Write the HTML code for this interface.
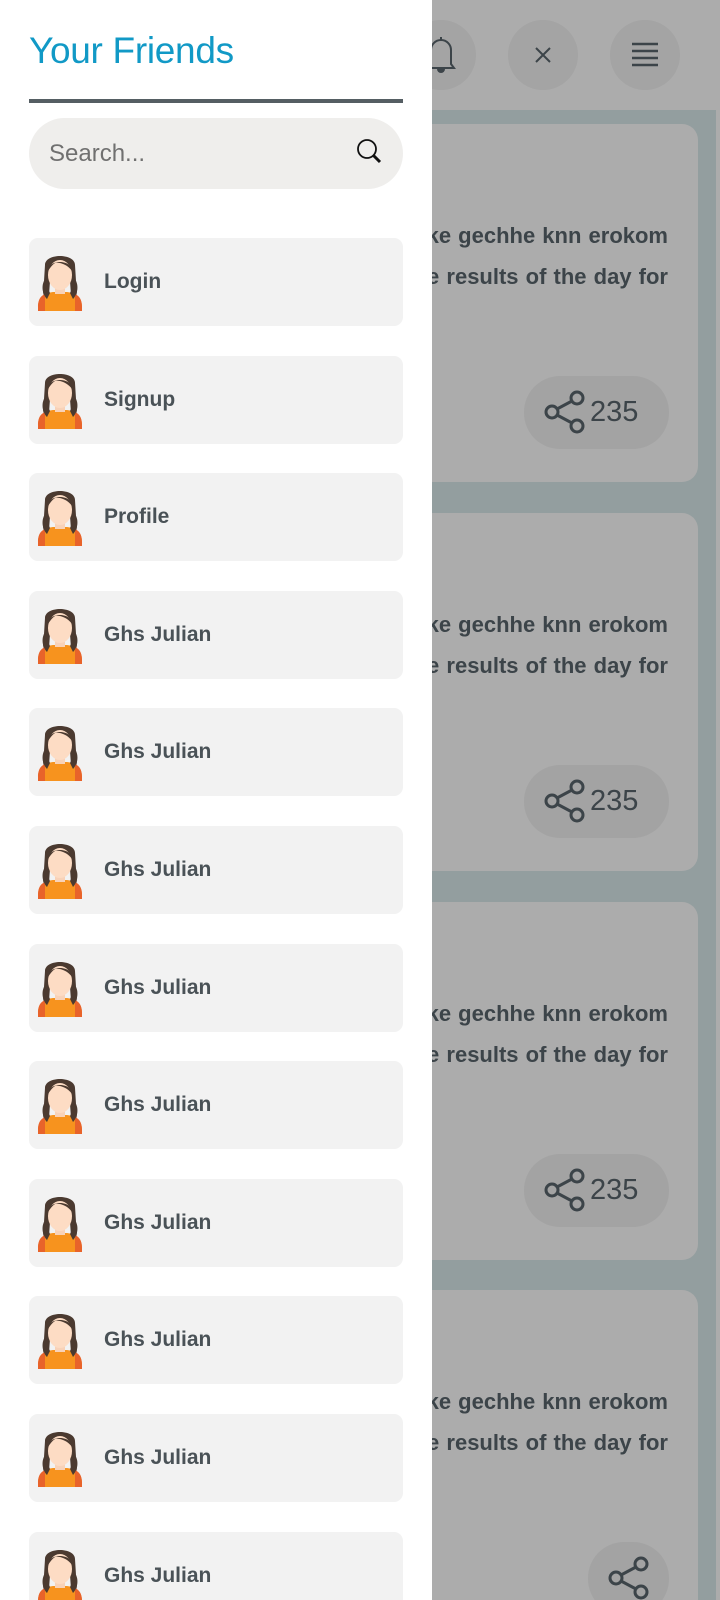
<!DOCTYPE html>
<html><head><meta charset="utf-8">
<style>
*{margin:0;padding:0;box-sizing:border-box}
html{width:720px;height:1600px;overflow:hidden}
body{width:720px;height:1600px;overflow:hidden;position:relative;background:#acacac;font-family:"Liberation Sans",Arial,sans-serif}
.band{position:absolute;left:0;top:110px;width:716px;height:1490px;background:#939e9f}
.circ{position:absolute;top:20px;width:70px;height:70px;border-radius:50%;background:#a4a4a4}
.card{position:absolute;left:300px;width:398px;height:358px;border-radius:16px;background:#acacac;overflow:hidden}
.line{position:absolute;right:30px;font-weight:bold;font-size:22px;color:#3c4449;white-space:nowrap;word-spacing:1px}
.pill{position:absolute;left:224px;width:145px;height:73px;border-radius:36px;background:#a3a3a3}
.pill span{position:absolute;left:66px;top:20px;font-size:29px;color:#3c4449}
.drawer{position:absolute;left:0;top:0;width:432px;height:1600px;background:#fff;z-index:5;overflow:hidden}
h1{position:absolute;left:29px;top:30px;font-size:37px;font-weight:normal;color:#1199c6;letter-spacing:-0.3px}
.div{position:absolute;left:29px;top:99px;width:374px;height:4px;background:#555e63}
.search{position:absolute;left:29px;top:118px;width:374px;height:71px;border-radius:36px;background:#efeeec}
.search span{position:absolute;left:20px;top:22px;font-size:24px;color:#707070}
.fr{position:absolute;left:29px;width:374px;height:88px;border-radius:9px;background:#f2f2f2}
.fr svg{position:absolute;left:6px;top:13px}
.fr span{position:absolute;left:75px;top:32px;font-size:21px;font-weight:bold;color:#4a5257}
</style></head><body>
<div class="band"></div>
<div class="circ" style="left:406px"><svg width="70" height="70" viewBox="0 0 70 70"><path d="M25 44 V30 a10 10 0 0 1 20 0 V44 l3 4 H22 z M35 17 v3" fill="none" stroke="#3c4449" stroke-width="2"/><path d="M31 49 h8 a4 4 0 0 1 -8 0z" fill="#3c4449"/></svg></div>
<div class="circ" style="left:508px"><svg width="70" height="70"><path d="M28 28 L42 42 M42 28 L28 42" stroke="#3c4449" stroke-width="2"/></svg></div>
<div class="circ" style="left:610px"><svg width="70" height="70"><path d="M22 24 H48 M22 31 H48 M22 38 H48 M22 45 H48" stroke="#3c4449" stroke-width="2.5"/></svg></div>

<div class="card" style="top:124px"><div class="line" style="top:99px">ke gechhe knn erokom</div><div class="line" style="top:140px">the results of the day for</div><div class="pill" style="top:252px"><svg width="60" height="73" style="position:absolute;left:18px;top:0"><circle cx="10" cy="36" r="6" fill="none" stroke="#3c4449" stroke-width="3"/><circle cx="35" cy="22" r="6" fill="none" stroke="#3c4449" stroke-width="3"/><circle cx="35" cy="50" r="6" fill="none" stroke="#3c4449" stroke-width="3"/><path d="M15 33 L30 25 M15 39 L30 47" stroke="#3c4449" stroke-width="3"/></svg><span>235</span></div></div>
<div class="card" style="top:513px"><div class="line" style="top:99px">ke gechhe knn erokom</div><div class="line" style="top:140px">the results of the day for</div><div class="pill" style="top:252px"><svg width="60" height="73" style="position:absolute;left:18px;top:0"><circle cx="10" cy="36" r="6" fill="none" stroke="#3c4449" stroke-width="3"/><circle cx="35" cy="22" r="6" fill="none" stroke="#3c4449" stroke-width="3"/><circle cx="35" cy="50" r="6" fill="none" stroke="#3c4449" stroke-width="3"/><path d="M15 33 L30 25 M15 39 L30 47" stroke="#3c4449" stroke-width="3"/></svg><span>235</span></div></div>
<div class="card" style="top:902px"><div class="line" style="top:99px">ke gechhe knn erokom</div><div class="line" style="top:140px">the results of the day for</div><div class="pill" style="top:252px"><svg width="60" height="73" style="position:absolute;left:18px;top:0"><circle cx="10" cy="36" r="6" fill="none" stroke="#3c4449" stroke-width="3"/><circle cx="35" cy="22" r="6" fill="none" stroke="#3c4449" stroke-width="3"/><circle cx="35" cy="50" r="6" fill="none" stroke="#3c4449" stroke-width="3"/><path d="M15 33 L30 25 M15 39 L30 47" stroke="#3c4449" stroke-width="3"/></svg><span>235</span></div></div>
<div class="card" style="top:1290px;height:310px;border-radius:16px 16px 0 0"><div class="line" style="top:99px">ke gechhe knn erokom</div><div class="line" style="top:140px">the results of the day for</div><div class="pill" style="top:252px;left:288px;width:81px"><svg width="60" height="73" style="position:absolute;left:18px;top:0"><circle cx="10" cy="36" r="6" fill="none" stroke="#3c4449" stroke-width="3"/><circle cx="35" cy="22" r="6" fill="none" stroke="#3c4449" stroke-width="3"/><circle cx="35" cy="50" r="6" fill="none" stroke="#3c4449" stroke-width="3"/><path d="M15 33 L30 25 M15 39 L30 47" stroke="#3c4449" stroke-width="3"/></svg></div></div>

<div class="drawer">
<h1>Your Friends</h1>
<div class="div"></div>
<div class="search"><span>Search...</span><svg width="30" height="30" style="position:absolute;left:326px;top:19px"><circle cx="12" cy="12" r="9" fill="none" stroke="#111" stroke-width="1.8"/><path d="M18.5 18.5 L25 25" stroke="#111" stroke-width="3"/></svg></div>
<div id="list"></div>
</div>
<script>
var names=["Login","Signup","Profile","Ghs Julian","Ghs Julian","Ghs Julian","Ghs Julian","Ghs Julian","Ghs Julian","Ghs Julian","Ghs Julian","Ghs Julian"];
var av='<svg width="50" height="60" viewBox="0 0 50 60"><path d="M10 14 C10 2 40 2 40 14 L41 30 C43 38 42 44 40 48 L36 44 L35 30 L15 30 L14 44 L10 48 C8 44 7 38 9 30 Z" fill="#4b3a30"/><path d="M3 56 C3 46 10 42 18 41 L32 41 C40 42 47 46 47 56 L47 60 L3 60Z" fill="#f7931e"/><path d="M3 56 C3 48 6 45 10 43 L10 60 L3 60Z M47 56 C47 48 44 45 40 43 L40 60 L47 60Z" fill="#e8632a"/><rect x="20" y="34" width="10" height="9" fill="#f8d2b8"/><ellipse cx="25" cy="24" rx="12" ry="15" fill="#fddcc4"/><path d="M13 20 C13 8 37 8 37 20 C33 14 25 11 20 12 C17 14 15 17 13 20Z" fill="#4b3a30"/><path d="M9 30 C6 36 8 44 12 48 L15 42 Z M41 30 C44 36 42 44 38 48 L35 42Z" fill="#4b3a30"/></svg>';
var h='';for(var i=0;i<names.length;i++){h+='<div class="fr" style="top:'+(238+i*117.6)+'px">'+av+'<span>'+names[i]+'</span></div>';}
document.getElementById('list').innerHTML=h;
</script>
</body></html>
